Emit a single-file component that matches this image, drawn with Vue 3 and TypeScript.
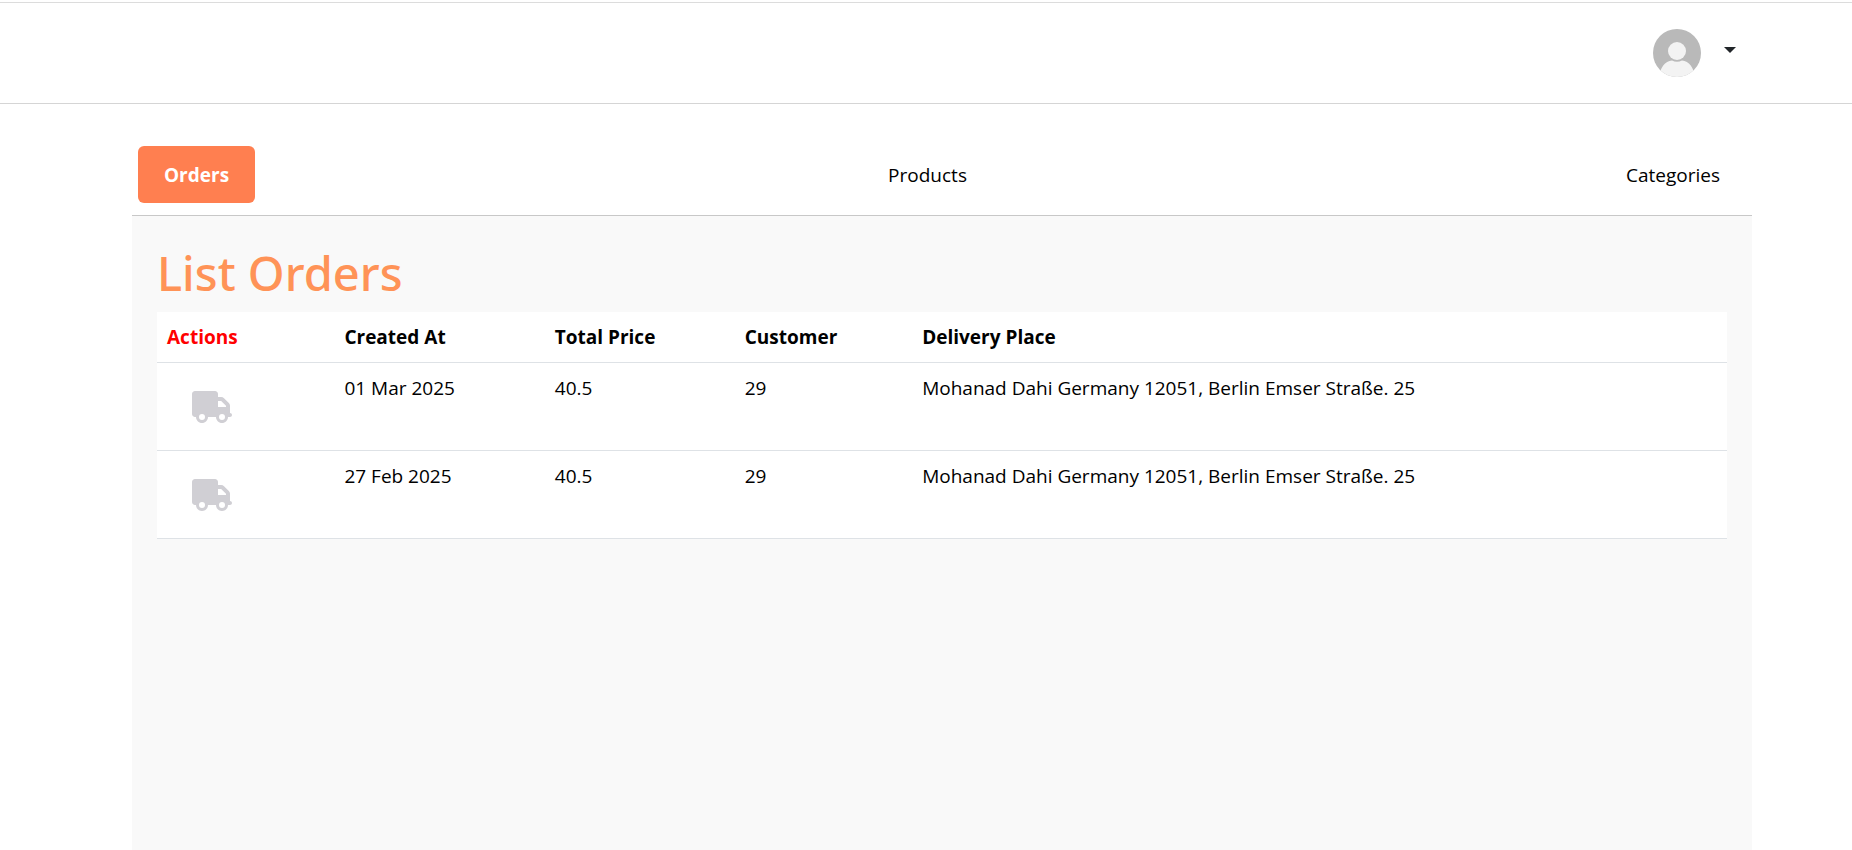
<script setup lang="ts">
import { ref } from 'vue'

interface Order {
  id: number
  createdAt: string
  totalPrice: number
  customer: number
  deliveryPlace: string
}

const tabs: string[] = ['Orders', 'Products', 'Categories']
const activeTab = ref('Orders')

const orders: Order[] = [
  { id: 2, createdAt: '01 Mar 2025', totalPrice: 40.5, customer: 29, deliveryPlace: 'Mohanad Dahi Germany 12051, Berlin Emser Straße. 25' },
  { id: 1, createdAt: '27 Feb 2025', totalPrice: 40.5, customer: 29, deliveryPlace: 'Mohanad Dahi Germany 12051, Berlin Emser Straße. 25' },
]
</script>

<template>
  <div class="page">
    <header class="topbar">
      <button class="account" type="button" aria-label="Account menu">
        <svg class="avatar" viewBox="0 0 48 48" aria-hidden="true">
          <defs>
            <clipPath id="avatar-clip"><circle cx="24" cy="24" r="24" /></clipPath>
          </defs>
          <g clip-path="url(#avatar-clip)">
            <rect width="48" height="48" fill="#b9b9b9" />
            <path d="M6 48C7 39 12 32 19 31.500Q24 34 29 31.500C36 32 41 39 42 48Z" fill="#f3f3f3" />
            <circle cx="24" cy="22" r="9" fill="#f3f3f3" />
          </g>
        </svg>
        <span class="caret"></span>
      </button>
    </header>

    <main class="content">
      <nav class="tabs">
        <a
          v-for="tab in tabs"
          :key="tab"
          href="#"
          class="tab"
          :class="{ active: tab === activeTab }"
          @click.prevent="activeTab = tab"
        >{{ tab }}</a>
      </nav>

      <section class="panel">
        <h1 class="title">List Orders</h1>
        <table class="orders">
          <thead>
            <tr>
              <th class="col-actions" scope="col">Actions</th>
              <th class="col-created" scope="col">Created At</th>
              <th class="col-price" scope="col">Total Price</th>
              <th class="col-customer" scope="col">Customer</th>
              <th scope="col">Delivery Place</th>
            </tr>
          </thead>
          <tbody>
            <tr v-for="order in orders" :key="order.id">
              <td>
                <button class="ship" type="button" aria-label="Ship order">
                  <svg class="truck" viewBox="0 0 640 512" aria-hidden="true">
                    <path fill="currentColor" d="M48 0C21.500 0 0 21.500 0 48V368c0 26.500 21.500 48 48 48H64c0 53 43 96 96 96s96-43 96-96H384c0 53 43 96 96 96s96-43 96-96h32c17.700 0 32-14.300 32-32s-14.300-32-32-32V288 256 237.300c0-17-6.700-33.300-18.700-45.300L512 114.700c-12-12-28.300-18.700-45.300-18.700H416V48c0-26.500-21.500-48-48-48H48zM416 160h50.700L544 237.300V256H416V160zM112 416a48 48 0 1 1 96 0 48 48 0 1 1-96 0zm368-48a48 48 0 1 1 0 96 48 48 0 1 1 0-96z" />
                  </svg>
                </button>
              </td>
              <td>{{ order.createdAt }}</td>
              <td>{{ order.totalPrice }}</td>
              <td>{{ order.customer }}</td>
              <td>{{ order.deliveryPlace }}</td>
            </tr>
          </tbody>
        </table>
      </section>
    </main>
  </div>
</template>

<style>
body {
  margin: 0;
  background: #fff;
}
</style>

<style scoped>
* {
  box-sizing: border-box;
}

.page {
  display: flex;
  flex-direction: column;
  min-height: 100vh;
  padding-top: 2px;
  font-family: "Segoe UI", "Open Sans", "Noto Sans", sans-serif;
  font-size: 19px;
  line-height: 30px;
  color: #000;
}

.topbar {
  display: flex;
  justify-content: flex-end;
  align-items: flex-start;
  height: 102px;
  padding: 26px 116px 0;
  border-top: 1px solid #dcdcdc;
  border-bottom: 1px solid #d5d5d5;
}

.account {
  display: flex;
  align-items: flex-start;
  gap: 23px;
  padding: 0;
  border: 0;
  background: none;
  cursor: pointer;
}

.avatar {
  width: 48px;
  height: 48px;
}

.caret {
  margin-top: 18px;
  border: 6px solid transparent;
  border-top-color: #212529;
  border-bottom: 0;
}

.content {
  display: flex;
  flex: 1;
  flex-direction: column;
  margin: 0 100px 0 132px;
}

.tabs {
  display: flex;
  justify-content: space-between;
  padding: 42px 6px 12px;
  border-bottom: 1px solid #c8c8c8;
}

.tab {
  padding: 14px 26px 13px;
  border-radius: 6px;
  color: #000;
  text-decoration: none;
}

.tab.active {
  background: #ff7f50;
  color: #fff;
  font-weight: 700;
}

.panel {
  flex: 1;
  padding: 27px 25px;
  background: #f9f9f9;
}

.title {
  margin: 0 0 9px;
  font-family: "Segoe UI", "Noto Sans", "Open Sans", sans-serif;
  font-size: 47px;
  font-weight: 500;
  line-height: 60px;
  color: #ff9357;
}

.orders {
  width: 100%;
  border-collapse: separate;
  border-spacing: 0;
  table-layout: fixed;
  background: #fff;
}

.orders th,
.orders td {
  padding: 10px;
  border-bottom: 1px solid #dee2e6;
  text-align: left;
  vertical-align: top;
}

.orders th {
  font-weight: 700;
}

.col-actions {
  width: 11.3%;
  color: #f00;
}

.col-created {
  width: 13.4%;
}

.col-price {
  width: 12.1%;
}

.col-customer {
  width: 11.3%;
}

.ship {
  display: block;
  padding: 18px 25px 17px;
  border: 0;
  background: none;
  color: #d0cfd4;
  cursor: pointer;
}

.truck {
  display: block;
  width: 40px;
  height: 32px;
}
</style>
